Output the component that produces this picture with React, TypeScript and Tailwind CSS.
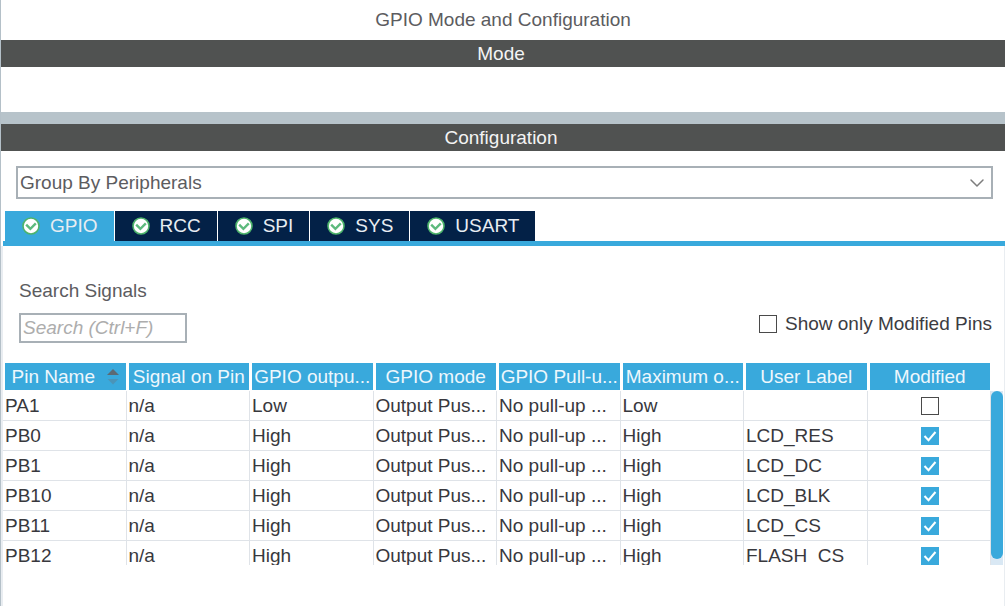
import React from 'react'
import { ChevronDown } from 'lucide-react'

const tabs = ['GPIO', 'RCC', 'SPI', 'SYS', 'USART']

const columns = [
  'Pin Name',
  'Signal on Pin',
  'GPIO outpu...',
  'GPIO mode',
  'GPIO Pull-u...',
  'Maximum o...',
  'User Label',
  'Modified',
]

const pins = [
  { name: 'PA1', level: 'Low', speed: 'Low', label: '', modified: false },
  { name: 'PB0', level: 'High', speed: 'High', label: 'LCD_RES', modified: true },
  { name: 'PB1', level: 'High', speed: 'High', label: 'LCD_DC', modified: true },
  { name: 'PB10', level: 'High', speed: 'High', label: 'LCD_BLK', modified: true },
  { name: 'PB11', level: 'High', speed: 'High', label: 'LCD_CS', modified: true },
  { name: 'PB12', level: 'High', speed: 'High', label: 'FLASH_CS', modified: true },
]

function StatusIcon() {
  return (
    <svg className="w-[18px] h-[18px] shrink-0" viewBox="0 0 18 18" fill="none" aria-hidden="true">
      <circle cx="9" cy="9" r="8" fill="#fff" stroke="#4db36b" strokeWidth="1.6" />
      <path d="M4.2 7.6 L8.4 11.8 L13.8 6.4" stroke="#5dba7d" strokeWidth="2.4" />
    </svg>
  )
}

function SortIcon() {
  return (
    <svg className="w-3 h-4 shrink-0" viewBox="0 0 12 16" aria-hidden="true">
      <path d="M6 0 L12 6 H0 Z" fill="#5c6a73" />
      <path d="M0.5 10 H11.5 L6 15.5 Z" fill="#4a94b8" />
    </svg>
  )
}

function Checkbox({ id, label, checked }: { id?: string; label?: string; checked?: boolean }) {
  return (
    <span className="inline-grid align-middle">
      <input
        id={id}
        type="checkbox"
        aria-label={label}
        defaultChecked={checked}
        className="peer col-start-1 row-start-1 w-[18px] h-[18px] appearance-none border border-[#4a4a4a] bg-white checked:border-[#39a9dc] checked:bg-[#39a9dc]"
      />
      <svg
        className="invisible peer-checked:visible pointer-events-none col-start-1 row-start-1 w-[18px] h-[18px]"
        viewBox="0 0 18 18"
        fill="none"
        aria-hidden="true"
      >
        <path d="M3.5 9 L7.5 13.2 L14.5 5" stroke="#fff" strokeWidth="2" />
      </svg>
    </span>
  )
}

function SectionBar({ title }: { title: string }) {
  return (
    <h2 className="h-[27px] pr-1 bg-[#505251] text-[#f4f4f4] text-center leading-7">{title}</h2>
  )
}

function App() {
  return (
    <div className="min-h-screen flex flex-col bg-white border-l border-[#b4c0c8] font-['Liberation_Sans',Arial,sans-serif] text-[19px] leading-6 text-[#5c5c60]">
      <h1 className="h-10 text-center leading-10">GPIO Mode and Configuration</h1>

      {/* Mode */}
      <SectionBar title="Mode" />
      <div className="h-[45px]" />
      <div className="h-3 bg-[#b7c3ca]" />

      {/* Configuration */}
      <SectionBar title="Configuration" />
      <div className="grid mt-[15px] ml-[15px] mr-3">
        <select
          aria-label="Group by"
          className="col-start-1 row-start-1 w-full h-[33px] pl-0.5 appearance-none border-2 border-[#a8b0b6] bg-white"
        >
          <option>Group By Peripherals</option>
        </select>
        <ChevronDown
          className="pointer-events-none col-start-1 row-start-1 self-center justify-self-end w-6 h-6 mr-1 text-[#7d7d7d]"
          strokeWidth={1.5}
        />
      </div>

      {/* Peripheral tabs */}
      <div role="tablist" className="mt-3 ml-0.5 pl-0.5 flex gap-px border-b-[5px] border-[#39a9dc]">
        {tabs.map((tab, i) => (
          <button
            key={tab}
            role="tab"
            aria-selected={i === 0}
            className={`h-[30px] pl-[17px] pr-4 flex items-center gap-[10px] text-[#e8edf2] ${
              i === 0 ? 'bg-[#39a9dc]' : 'bg-[#032147]'
            }`}
          >
            <StatusIcon />
            {tab}
          </button>
        ))}
      </div>

      <div className="flex-1 border-l-2 border-r border-[#e9edf1] pt-[33px]">
        {/* Search and filter */}
        <div className="flex items-end justify-between pl-4 pr-3">
          <div className="flex flex-col gap-[10px]">
            <label htmlFor="search">Search Signals</label>
            <input
              id="search"
              type="text"
              placeholder="Search (Ctrl+F)"
              className="w-[168px] h-[30px] px-0.5 border-2 border-[#a8b0b6] placeholder:italic placeholder:text-[#adadad]"
            />
          </div>
          <div className="flex items-center gap-2 pb-[7px] text-[#3c3c42]">
            <Checkbox id="modified-only" />
            <label htmlFor="modified-only">Show only Modified Pins</label>
          </div>
        </div>

        {/* Pin table */}
        <div className="mt-5 flex">
          <div className="flex-1 h-[202px] overflow-hidden">
            <table className="w-full table-fixed border-separate border-spacing-0 text-[#38383d]">
              <thead>
                <tr>
                  {columns.map((col, i) => (
                    <th key={col} className="h-7 p-0 border-l-2 border-r border-b border-white bg-[#39a9dc] font-normal text-[#eef7fc]">
                      <div className="flex items-center justify-center gap-3 whitespace-nowrap overflow-hidden">
                        {col}
                        {i === 0 && <SortIcon />}
                      </div>
                    </th>
                  ))}
                </tr>
              </thead>
              <tbody className="[&_td]:h-[30px] [&_td]:p-0 [&_td]:pl-0.5 [&_td]:border-r [&_td]:border-b [&_td]:border-[#dfe3e8] [&_td]:whitespace-nowrap">
                {pins.map((pin) => (
                  <tr key={pin.name}>
                    <td>{pin.name}</td>
                    <td>n/a</td>
                    <td>{pin.level}</td>
                    <td>Output Pus...</td>
                    <td>No pull-up ...</td>
                    <td>{pin.speed}</td>
                    <td>{pin.label}</td>
                    <td>
                      <div className="flex justify-center">
                        <Checkbox label={`${pin.name} modified`} checked={pin.modified} />
                      </div>
                    </td>
                  </tr>
                ))}
              </tbody>
            </table>
          </div>
          {/* Scrollbar */}
          <div className="w-3 mt-7 mr-px bg-[#d9e8f4]">
            <div className="h-[168px] rounded-full bg-[#39a9dc]" />
          </div>
        </div>
      </div>
    </div>
  )
}

export default App
